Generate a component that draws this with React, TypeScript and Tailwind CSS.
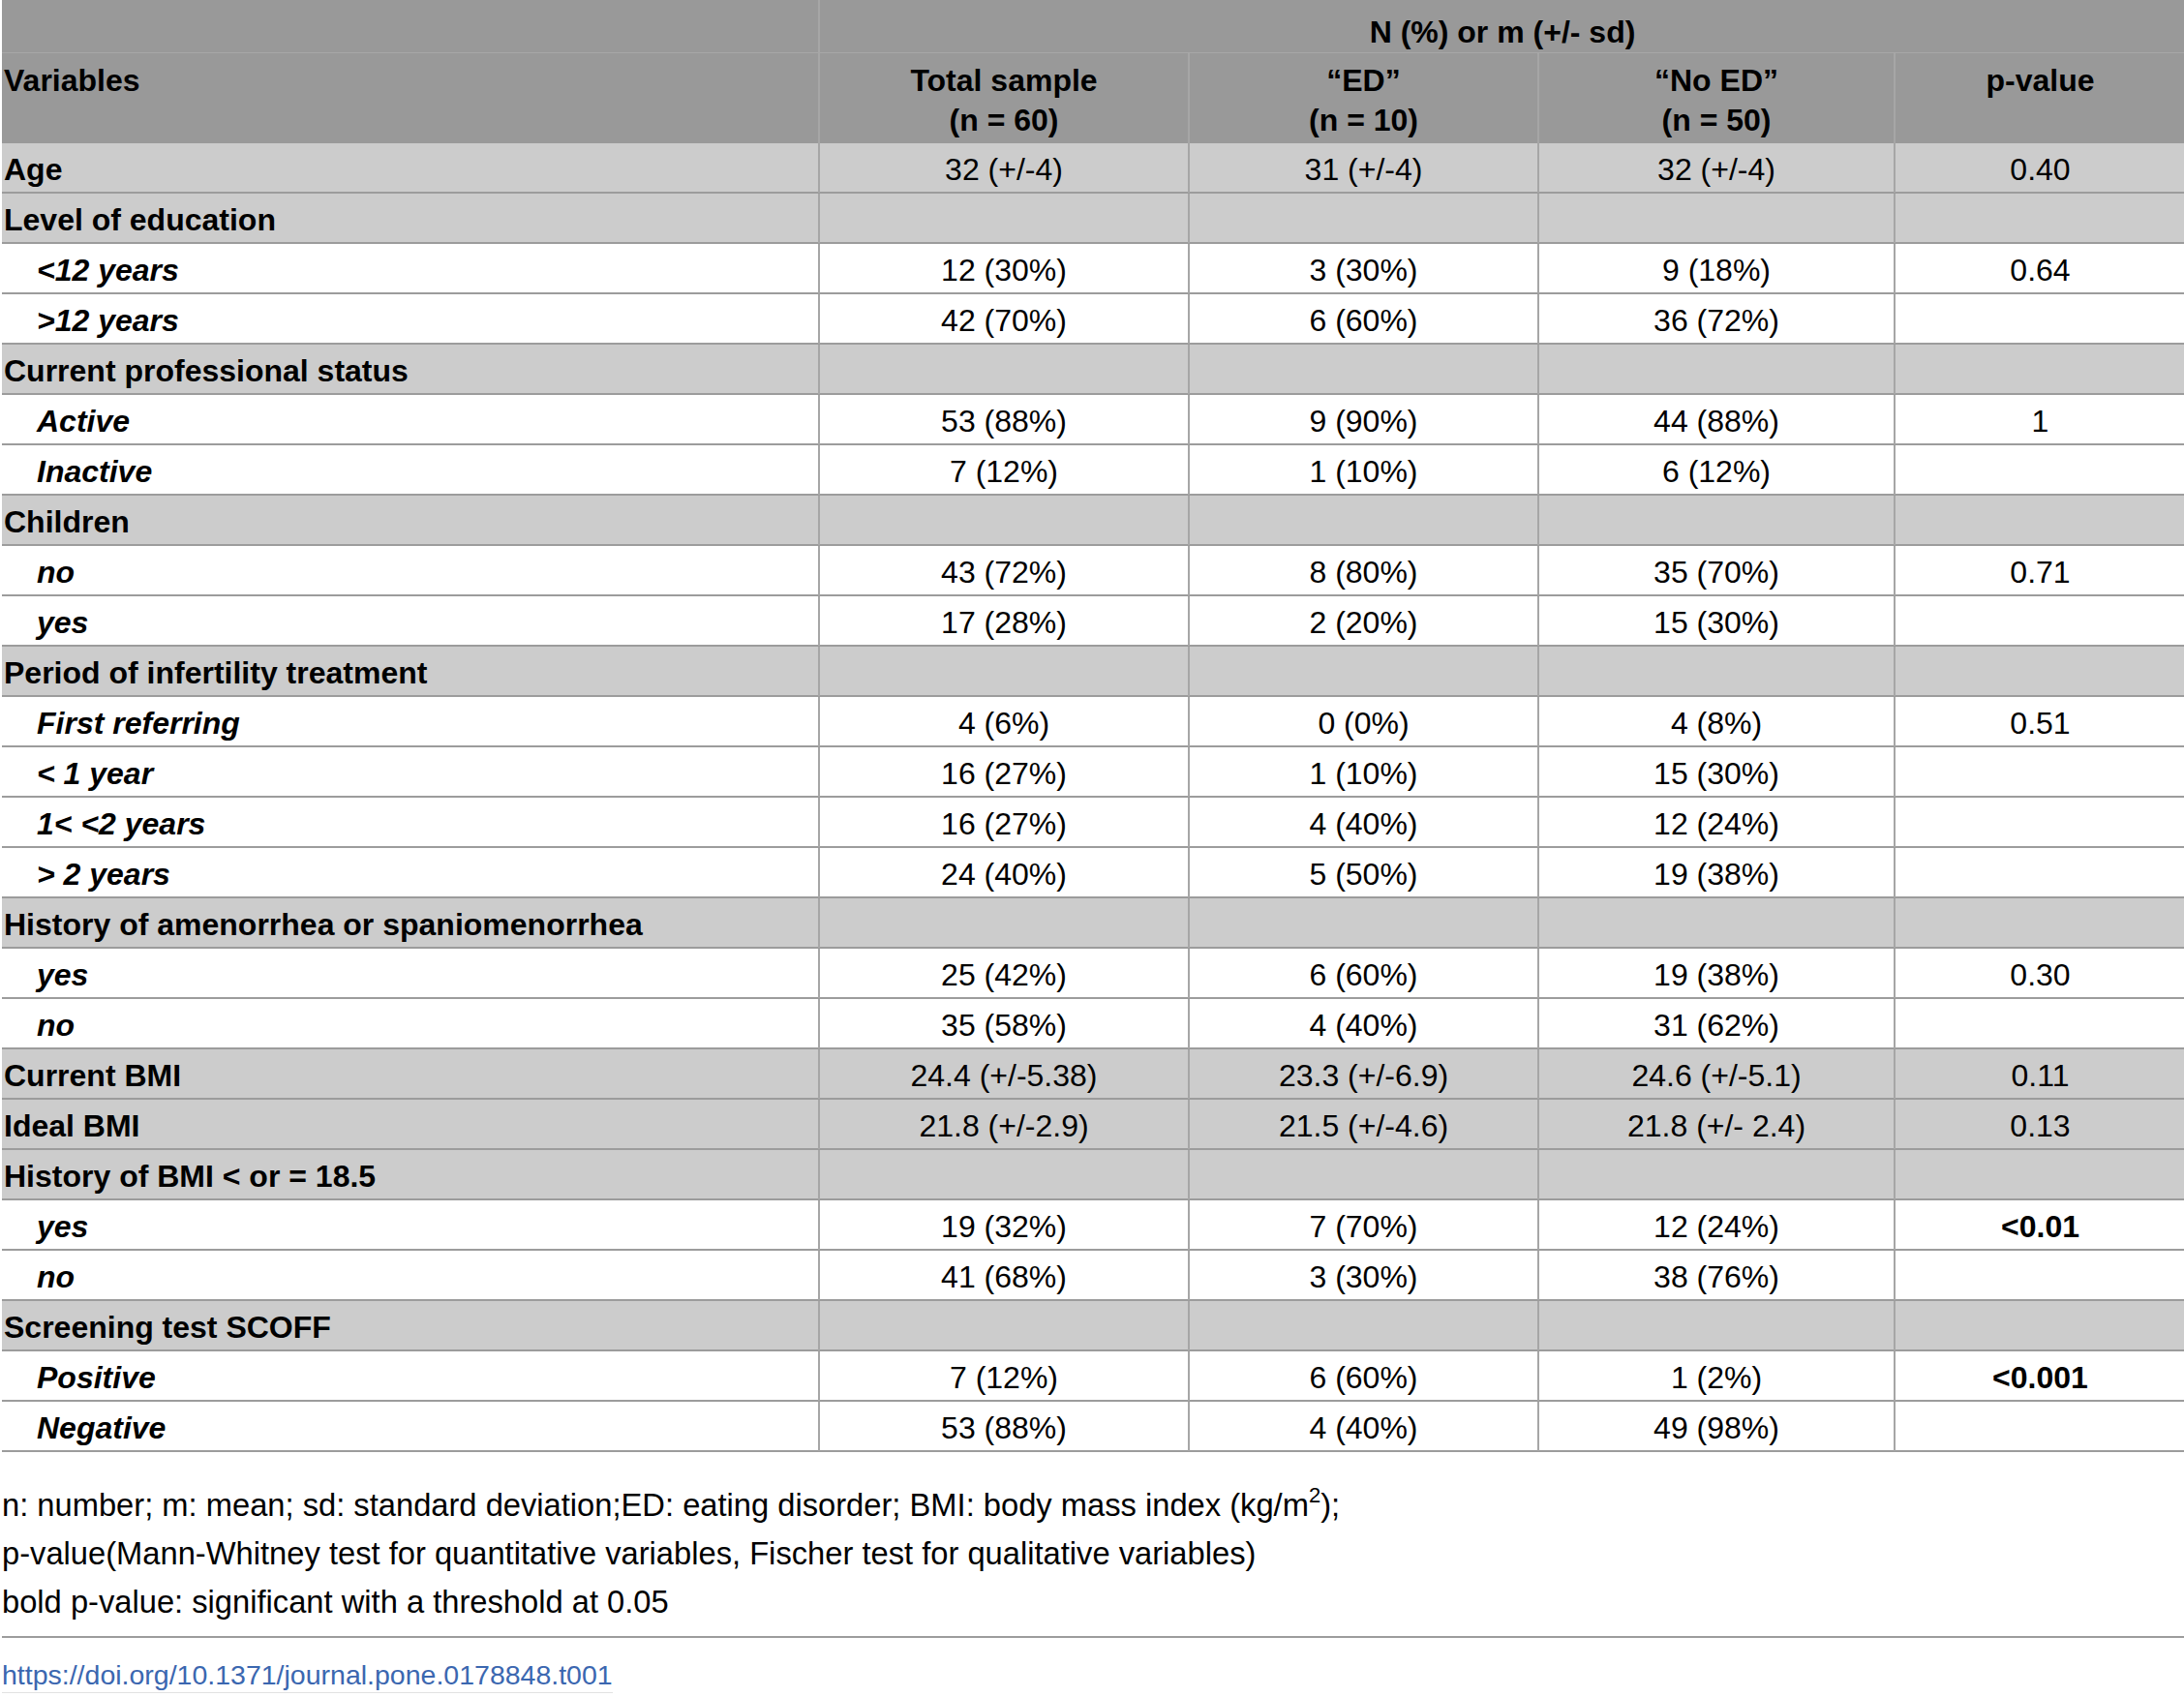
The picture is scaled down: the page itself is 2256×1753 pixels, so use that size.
import { FC } from "react";

type Row = {
	label: string;
	sub?: boolean;
	cells?: string[];
	p?: string;
	bold?: boolean;
};

const rows: Row[] = [
	{ label: "Age", cells: ["32 (+/-4)", "31 (+/-4)", "32 (+/-4)"], p: "0.40" },
	{ label: "Level of education" },
	{ label: "<12 years", sub: true, cells: ["12 (30%)", "3 (30%)", "9 (18%)"], p: "0.64" },
	{ label: ">12 years", sub: true, cells: ["42 (70%)", "6 (60%)", "36 (72%)"] },
	{ label: "Current professional status" },
	{ label: "Active", sub: true, cells: ["53 (88%)", "9 (90%)", "44 (88%)"], p: "1" },
	{ label: "Inactive", sub: true, cells: ["7 (12%)", "1 (10%)", "6 (12%)"] },
	{ label: "Children" },
	{ label: "no", sub: true, cells: ["43 (72%)", "8 (80%)", "35 (70%)"], p: "0.71" },
	{ label: "yes", sub: true, cells: ["17 (28%)", "2 (20%)", "15 (30%)"] },
	{ label: "Period of infertility treatment" },
	{ label: "First referring", sub: true, cells: ["4 (6%)", "0 (0%)", "4 (8%)"], p: "0.51" },
	{ label: "< 1 year", sub: true, cells: ["16 (27%)", "1 (10%)", "15 (30%)"] },
	{ label: "1< <2 years", sub: true, cells: ["16 (27%)", "4 (40%)", "12 (24%)"] },
	{ label: "> 2 years", sub: true, cells: ["24 (40%)", "5 (50%)", "19 (38%)"] },
	{ label: "History of amenorrhea or spaniomenorrhea" },
	{ label: "yes", sub: true, cells: ["25 (42%)", "6 (60%)", "19 (38%)"], p: "0.30" },
	{ label: "no", sub: true, cells: ["35 (58%)", "4 (40%)", "31 (62%)"] },
	{ label: "Current BMI", cells: ["24.4 (+/-5.38)", "23.3 (+/-6.9)", "24.6 (+/-5.1)"], p: "0.11" },
	{ label: "Ideal BMI", cells: ["21.8 (+/-2.9)", "21.5 (+/-4.6)", "21.8 (+/- 2.4)"], p: "0.13" },
	{ label: "History of BMI < or = 18.5" },
	{ label: "yes", sub: true, cells: ["19 (32%)", "7 (70%)", "12 (24%)"], p: "<0.01", bold: true },
	{ label: "no", sub: true, cells: ["41 (68%)", "3 (30%)", "38 (76%)"] },
	{ label: "Screening test SCOFF" },
	{ label: "Positive", sub: true, cells: ["7 (12%)", "6 (60%)", "1 (2%)"], p: "<0.001", bold: true },
	{ label: "Negative", sub: true, cells: ["53 (88%)", "4 (40%)", "49 (98%)"] },
];

const grid = "grid grid-cols-[845px_382px_361px_368px_299px]";

const App: FC = () => {
	return (
		<div className="w-[2256px] min-h-[1753px] bg-white pl-[2px] text-black font-['Liberation_Sans',Arial,sans-serif]">
			{/* header */}
			<div className="bg-[#999999] text-[32px] font-bold">
				<div className={`${grid} h-[55px] border-b border-[#a8a8a8]`}>
					<div className="border-r-2 border-[#a6a6a6]"></div>
					<div className="col-span-4 flex items-center justify-center pt-[9px]">
						N (%) or m (+/- sd)
					</div>
				</div>
				<div className={`${grid} h-[93px] leading-[41px]`}>
					<div className="border-r-2 border-[#a6a6a6] pt-[8px] pl-[2px]">Variables</div>
					<div className="border-r-2 border-[#a6a6a6] pt-[8px] text-center">
						Total sample
						<br />
						(n = 60)
					</div>
					<div className="border-r-2 border-[#a6a6a6] pt-[8px] text-center">
						“ED”
						<br />
						(n = 10)
					</div>
					<div className="border-r-2 border-[#a6a6a6] pt-[8px] text-center">
						“No ED”
						<br />
						(n = 50)
					</div>
					<div className="pt-[8px] text-center">p-value</div>
				</div>
			</div>

			{/* body */}
			<div className="text-[32px]">
				{rows.map((r, i) => (
					<div
						key={i}
						className={`${grid} h-[52px] border-b-2 border-[#9c9c9c] ${
							r.sub ? "bg-white" : "bg-[#cccccc]"
						}`}
					>
						<div
							className={`flex items-center pt-[3px] border-r-2 border-[#a6a6a6] font-bold ${
								r.sub ? "pl-[36px] italic" : "pl-[2px]"
							}`}
						>
							{r.label}
						</div>
						{[0, 1, 2].map((c) => (
							<div
								key={c}
								className="flex items-center justify-center pt-[3px] border-r-2 border-[#a6a6a6]"
							>
								{r.cells ? r.cells[c] : ""}
							</div>
						))}
						<div
							className={`flex items-center justify-center pt-[3px] ${r.bold ? "font-bold" : ""}`}
						>
							{r.p ?? ""}
						</div>
					</div>
				))}
			</div>

			{/* notes */}
			<div className="mt-[30px] text-[32.7px] leading-[50px]">
				<p>
					n: number; m: mean; sd: standard deviation;ED: eating disorder; BMI: body mass index (kg/m
					<sup className="text-[22px] -top-[14px]">2</sup>);
				</p>
				<p>p-value(Mann-Whitney test for quantitative variables, Fischer test for qualitative variables)</p>
				<p>bold p-value: significant with a threshold at 0.05</p>
			</div>
			<div className="mt-[10px] h-[2px] w-[2254px] bg-[#9c9c9c]"></div>
			<div className="mt-[20px]">
				<span className="inline-block border-b border-[#e2e2e2] text-[28.5px] leading-[36px] text-[#3b67b0]">
					https://doi.org/10.1371/journal.pone.0178848.t001
				</span>
			</div>
		</div>
	);
};

export default App;
